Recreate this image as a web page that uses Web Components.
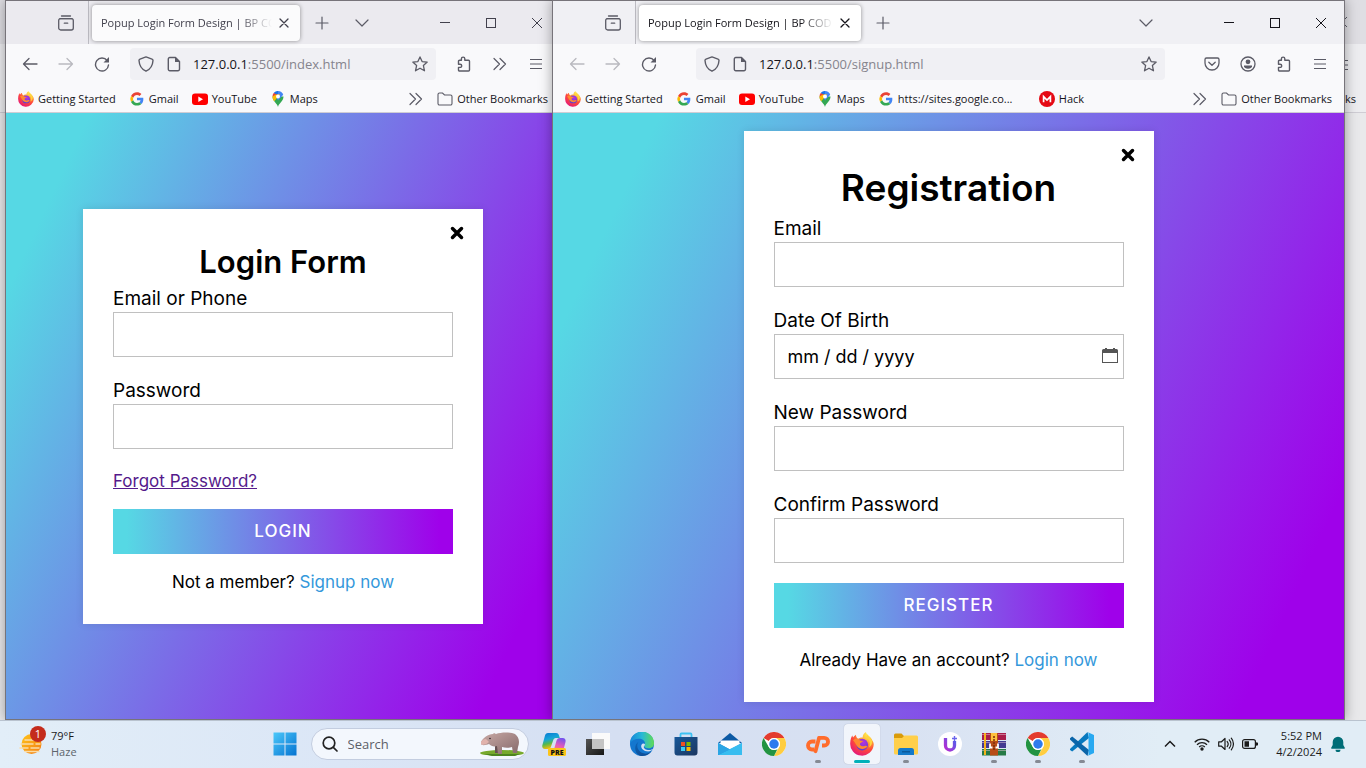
<!DOCTYPE html>
<html lang="en">
<head>
<meta charset="utf-8">
<title>Popup Login Form Design</title>
<style>
    html, body {
        margin: 0;
        height: 100%;
        overflow: hidden;
    }

    body {
        display: flex;
        flex-direction: column;
        font-family: "Open Sans", "Noto Sans", sans-serif;
        background: #e6e6e8;
    }

    .desktop {
        flex: 1;
        min-height: 0;
        display: grid;
        grid-template-columns: 5px minmax(0, 547fr) minmax(0, 793fr) 21px;
    }

    /* the login window slides a little under the signup window */
    .under {
        margin-right: -9px;
    }

    .over {
        z-index: 1;
    }
</style>
</head>
<body>
<div class="desktop">
    <window-edge></window-edge>

    <browser-window class="under" tab="Popup Login Form Design | BP CO" host-name="127.0.0.1" path=":5500/index.html">
        <icon-button slot="tools" icon="puzzle" label="Extensions"></icon-button>
        <icon-button slot="tools" icon="more" label="More tools"></icon-button>
        <icon-button slot="tools" icon="menu" label="Open application menu"></icon-button>
        <bookmark-link slot="bookmarks" icon="firefox">Getting Started</bookmark-link>
        <bookmark-link slot="bookmarks" icon="google">Gmail</bookmark-link>
        <bookmark-link slot="bookmarks" icon="youtube">YouTube</bookmark-link>
        <bookmark-link slot="bookmarks" icon="maps">Maps</bookmark-link>
        <popup-form heading="Login Form" action-label="LOGIN">
            <form-field label="Email or Phone" type="text"></form-field>
            <form-field label="Password" type="password"></form-field>
            <a slot="extra" href="#forgot">Forgot Password?</a>
            <span slot="footer">Not a member? <a href="#signup">Signup now</a></span>
        </popup-form>
    </browser-window>

    <browser-window class="over" active tab="Popup Login Form Design | BP COD" host-name="127.0.0.1" path=":5500/signup.html">
        <icon-button slot="tools" icon="pocket" label="Save to Pocket"></icon-button>
        <icon-button slot="tools" icon="account" label="Account"></icon-button>
        <icon-button slot="tools" icon="puzzle" label="Extensions"></icon-button>
        <icon-button slot="tools" icon="menu" label="Open application menu"></icon-button>
        <bookmark-link slot="bookmarks" icon="firefox">Getting Started</bookmark-link>
        <bookmark-link slot="bookmarks" icon="google">Gmail</bookmark-link>
        <bookmark-link slot="bookmarks" icon="youtube">YouTube</bookmark-link>
        <bookmark-link slot="bookmarks" icon="maps">Maps</bookmark-link>
        <bookmark-link slot="bookmarks" icon="google" wide>htts://sites.google.co...</bookmark-link>
        <bookmark-link slot="bookmarks" icon="mega">Hack</bookmark-link>
        <popup-form large heading="Registration" action-label="REGISTER">
            <form-field label="Email" type="email"></form-field>
            <form-field label="Date Of Birth" type="date"></form-field>
            <form-field label="New Password" type="password"></form-field>
            <form-field label="Confirm Password" type="password"></form-field>
            <span slot="footer">Already Have an account? <a href="#login">Login now</a></span>
        </popup-form>
    </browser-window>

    <window-edge detailed></window-edge>
</div>

<task-bar>
    <task-app icon="copilot" label="Copilot"></task-app>
    <task-app icon="taskview" label="Task View"></task-app>
    <task-app icon="edge" label="Edge"></task-app>
    <task-app icon="store" label="Microsoft Store"></task-app>
    <task-app icon="mail" label="Mail"></task-app>
    <task-app icon="chrome" label="Chrome"></task-app>
    <task-app icon="cpanel" label="cPanel" running></task-app>
    <task-app icon="firefox" label="Firefox" current></task-app>
    <task-app icon="folder" label="File Explorer" running></task-app>
    <task-app icon="sparkle" label="U"></task-app>
    <task-app icon="winrar" label="WinRAR" running></task-app>
    <task-app icon="chrome" label="Chrome" running></task-app>
    <task-app icon="vscode" label="Visual Studio Code" running></task-app>
</task-bar>

<script>
(function () {
    const line = 'fill="none" stroke="currentColor" stroke-linecap="round" stroke-linejoin="round"';

    // [viewBox size, markup]
    const icons = {
        archive: [16, `<g ${line} stroke-width="1.3"><path d="M3.5 1h9M2 3.6h12"/><rect x=".7" y="3.6" width="14.6" height="11.4" rx="2"/><path d="M6.3 8.2h3.4"/></g>`],
        close: [16, `<path ${line} stroke-width="1.3" d="M4 4l8 8M12 4l-8 8"/>`],
        plus: [16, `<path ${line} stroke-width="1.2" d="M8 2v12M2 8h12"/>`],
        down: [16, `<path ${line} stroke-width="1.2" d="M2 5l6 6 6-6"/>`],
        minimize: [16, `<path stroke="currentColor" d="M3 7.5h10"/>`],
        maximize: [16, `<rect x="3.5" y="3.5" width="9" height="9" fill="none" stroke="currentColor"/>`],
        quit: [16, `<path stroke="currentColor" d="M3 3l10 10M13 3L3 13"/>`],
        back: [16, `<path ${line} stroke-width="1.3" d="M15 8H1.5M7 2.5L1.5 8 7 13.5"/>`],
        forward: [16, `<path ${line} stroke-width="1.3" d="M1 8h13.5M9 2.5L14.5 8 9 13.5"/>`],
        reload: [16, `<path ${line} stroke-width="1.4" d="M13.2 4.6A6.5 6.5 0 1 0 14.5 9"/><path fill="currentColor" d="M15 1v5.5H9.5z"/>`],
        shield: [16, `<path ${line} stroke-width="1.4" d="M8 .9l6 2.2c.8.3 1 .7 1 1.4-.3 5-2.4 8.700-7 10.700C3.400 13.200 1.300 9.500 1 4.500c0-.7.2-1.100 1-1.400z"/>`],
        page: [16, `<path ${line} stroke-width="1.4" d="M3.800 1.500h5.700l4 4v7.700a1.500 1.500 0 0 1-1.500 1.500H3.800a1.500 1.500 0 0 1-1.500-1.500V3a1.500 1.500 0 0 1 1.500-1.500z"/><path fill="currentColor" d="M9 1l5 5H9z"/>`],
        star: [16, `<path ${line} stroke-width="1.3" d="M8 .9l2.100 4.700 5.100.5-3.800 3.500 1.100 5.200L8 12.200l-4.500 2.600 1.100-5.200L.8 6.100l5.100-.5z"/>`],
        puzzle: [16, `<path ${line} stroke-width="1.4" d="M5.400 4.200V2.800a1.700 1.700 0 0 1 3.400 0v1.400h3.700a1 1 0 0 1 1 1V14a1 1 0 0 1-1 1h-9a1 1 0 0 1-1-1v-2.600h1.600a1.600 1.600 0 0 0 0-3.200H2.500V5.200a1 1 0 0 1 1-1z"/>`],
        more: [16, `<path ${line} stroke-width="1.2" d="M2 2.500L7.500 8 2 13.500M8 2.500L13.500 8 8 13.500"/>`],
        menu: [16, `<path stroke="currentColor" stroke-width="1.2" d="M2 3.500h12M2 8h12M2 12.500h12"/>`],
        pocket: [16, `<path ${line} stroke-width="1.3" d="M2.500 2h11A1.500 1.500 0 0 1 15 3.500V7a7 7 0 0 1-14 0V3.500A1.500 1.500 0 0 1 2.500 2zM4.800 6.200L8 9.300l3.200-3.100"/>`],
        account: [16, `<circle cx="8" cy="8" r="7" fill="none" stroke="currentColor" stroke-width="1.3"/><circle cx="8" cy="5.800" r="2.400" fill="currentColor"/><path fill="currentColor" d="M4 9.500h8v.8c0 1.500-1.800 2.400-4 2.400s-4-.9-4-2.400z"/>`],
        bookmarks: [16, `<path fill="none" stroke="#5b5b66" stroke-width="1.1" d="M1 12.500v-9A1.500 1.500 0 0 1 2.500 2h3l2 2h6A1.500 1.500 0 0 1 15 5.500v7a1.500 1.500 0 0 1-1.500 1.500h-11A1.500 1.500 0 0 1 1 12.500z"/>`],
        dismiss: [16, `<path fill="none" stroke="currentColor" stroke-width="3.500" stroke-linecap="round" d="M3.500 3.500l9 9M12.500 3.500l-9 9"/>`],
        google: [48, `<g transform="translate(4 4) scale(.83)"><path fill="#ea4335" d="M24 9.500c3.500 0 6.700 1.200 9.200 3.600l6.900-6.900C35.900 2.400 30.500 0 24 0 14.600 0 6.500 5.400 2.600 13.200l8 6.200C12.400 13.700 17.700 9.500 24 9.500z"/><path fill="#4285f4" d="M47 24.600c0-1.600-.2-3.100-.4-4.600H24v9h12.900c-.6 3-2.200 5.500-4.700 7.200l7.700 6C44.400 38 47 31.800 47 24.600z"/><path fill="#fbbc05" d="M10.500 28.600a14 14 0 0 1 0-9.200l-8-6.200a24 24 0 0 0 0 21.600z"/><path fill="#34a853" d="M24 48c6.500 0 11.900-2.100 15.900-5.800l-7.700-6c-2.200 1.500-4.900 2.300-8.200 2.300-6.300 0-11.600-4.200-13.500-9.900l-8 6.200C6.500 42.600 14.600 48 24 48z"/></g>`],
        youtube: [16, `<rect y="2.500" width="16" height="11.500" rx="3" fill="#f00"/><path fill="#fff" d="M6.300 5.500v5.500l4.700-2.700z"/>`],
        maps: [16, `<path fill="#34a853" d="M8 16c.5-3.500 5.500-5.500 5.500-10.500H2.500C2.500 10.500 7.500 12.500 8 16z"/><path fill="#4285f4" d="M8 0a5.500 5.500 0 0 1 5.200 3.800L8 9.500 4 2z"/><path fill="#1a73e8" d="M8 0a5.500 5.500 0 0 0-4.300 2L8 5.500z"/><path fill="#ea4335" d="M3.700 2A5.500 5.500 0 0 0 2.500 5.500L5.500 7l2.500-3z"/><path fill="#fbbc04" d="M2.500 5.500c0 2 .7 3.400 1.700 4.800l6-7-4.700.4z"/><circle cx="8" cy="5.500" r="2" fill="#fff"/>`],
        mega: [16, `<circle cx="8" cy="8" r="8" fill="#e50914"/><path fill="none" stroke="#fff" stroke-width="1.700" d="M4.600 11.300V5.600L8 9l3.400-3.400v5.700"/>`],
        firefox: [32, `<defs><radialGradient id="a" cx=".75" cy=".1" r="1"><stop offset="0" stop-color="#fff44f"/><stop offset=".35" stop-color="#ffa436"/><stop offset=".65" stop-color="#ff4a38"/><stop offset="1" stop-color="#e2157f"/></radialGradient><radialGradient id="b" cx=".6" cy=".3" r=".7"><stop offset="0" stop-color="#b833e1"/><stop offset="1" stop-color="#5b3fd0"/></radialGradient></defs><path fill="url(#a)" d="M29.800 11.200c-1-2.700-3-4.600-4.700-6.200C22.300 2.600 21.300 1.400 21.400 0c-3 1.600-4.700 4.800-4.500 7.200-3-.2-4.500.6-6 1.800C8.600 7.700 7.900 5.800 8 3.700 6.400 4.600 5.200 5.800 4.300 7.100 3.500 7.700 3.200 4.900 3.500 4.200 1.800 6 .5 10 .3 14.500A15.700 15.700 0 1 0 31.600 17c.1-2-.5-4.200-1.800-5.800z"/><circle cx="16.300" cy="16.800" r="7.800" fill="url(#b)"/><path fill="#ff8a30" d="M4 11c2.500-2.500 6-2 8.500-.2 1.500 1 3.600.8 5 1.300-.8 1.800-3.800 2-4.200 3.500-.4 2.500 2.600 4.300 6 3 2-.7 3.200-.4 3.800.4-1.800 3.500-7 4.600-10.500 2.600C8 19 7.500 14 4 11z"/><path fill="#ffd43f" d="M21.500 7c4.500 3 6 8 4 13.500 3-2 4.300-5 4-8.500-1.500-4-5-5-6.500-9z"/>`],
        copilot: [24, `<defs><linearGradient id="a" x2=".3" y2="1"><stop offset="0" stop-color="#0878d3"/><stop offset=".45" stop-color="#16a6d8"/><stop offset=".7" stop-color="#55b84c"/><stop offset="1" stop-color="#fabd05"/></linearGradient><linearGradient id="b" x1=".7" x2=".3" y2="1"><stop offset="0" stop-color="#7354ed"/><stop offset=".5" stop-color="#e55ab9"/><stop offset="1" stop-color="#ff9a4c"/></linearGradient></defs><path fill="url(#a)" d="M6 1h8c2 0 2.500 1 3 2.500l.8 2.500h-4c-1.500 0-2.300 1-2.700 2.500L9.200 14c-.5 2-1.200 3-3 3H3c-2.300 0-3.200-1.700-2.600-4l2.600-9.500C3.500 2 4.300 1 6 1z"/><path fill="url(#b)" d="M18 6h2.500c2.700 0 3.500 1.800 3 4l-2 7.500c-.5 2-1.500 3-3 3H10c-1 0-1.700-1-2-2h1.700c1.700 0 2.300-1 2.700-2.500l2-7C15 7 16 6 18 6z"/><rect x="6" y="16" width="18" height="8" rx="1.500" fill="#fcc419"/><text x="15" y="22.500" text-anchor="middle" font-family="Open Sans, sans-serif" font-weight="800" font-size="7" fill="#111">PRE</text>`],
        taskview: [24, `<defs><linearGradient id="a" y2="1"><stop offset="0" stop-color="#555"/><stop offset="1" stop-color="#161616"/></linearGradient></defs><rect y="7" width="18" height="16" fill="url(#a)"/><rect x="6" y="1" width="18" height="16" fill="#fafafa"/><path fill="#c4c4c4" d="M6 7h12v10H6z"/>`],
        edge: [24, `<defs><linearGradient id="a" x2="1"><stop offset="0" stop-color="#1686d9"/><stop offset=".5" stop-color="#28b8d7"/><stop offset="1" stop-color="#60dc55"/></linearGradient><linearGradient id="b" x2=".7" y2="1"><stop offset="0" stop-color="#0c65b9"/><stop offset="1" stop-color="#104a91"/></linearGradient></defs><circle cx="12" cy="12" r="12" fill="#1477cf"/><path fill="url(#a)" d="M0 11.500A12 12 0 0 1 24 11.500c0 3.200-2.500 4.800-5.500 4.800-3 0-4.500-1.200-4.500-2.300 0-1 1-1.200 1-3 0-2.200-2.700-4.300-6-4.300-4 0-7.500 2-9 4.800z"/><path fill="url(#b)" d="M9 9.500c-3 2.500-2.500 9.500 4.500 11.800 4 1.200 7.500-1 8.700-3.300A12 12 0 0 1 10 23.800C4 21 3.500 12.500 9 9.500z"/><path fill="#d6e0f2" d="M14 14c-1 2.500 2 4 5 4 2 0 3.500-.6 4.500-1.500-1 2-4 3.300-7 2.800-4-.7-6.200-4.300-5-6.600.8-1.500 3-1.500 3.500-.2.1.5-.3 1-1 1.500z"/>`],
        store: [24, `<defs><linearGradient id="a" y2="1"><stop offset="0" stop-color="#17589a"/><stop offset="1" stop-color="#1c365f"/></linearGradient></defs><path fill="none" stroke="#3cc1f2" stroke-width="1.800" d="M6.500 6V2.500a1 1 0 0 1 1-1h9a1 1 0 0 1 1 1V6"/><path fill="url(#a)" d="M.5 5h23v15.500a3 3 0 0 1-3 3h-17a3 3 0 0 1-3-3z"/><path fill="#f25022" d="M7 10h4v4H7z"/><path fill="#7fba00" d="M12.500 10h4v4h-4z"/><path fill="#3ccbf4" d="M7 15h4v4H7z"/><path fill="#ffb900" d="M12.500 15h4v4h-4z"/>`],
        mail: [24, `<path fill="#0c59a4" d="M0 11L12 1l12 10z"/><path fill="#fff" d="M2.500 8.500h19V17h-19z"/><path fill="#1b8fdc" d="M0 11l12 6.500L24 11v12H0z"/><path fill="#38bdf0" d="M24 11L0 23h24z"/><path fill="#2ba5e4" d="M0 11l12 6.500L0 23z"/>`],
        chrome: [48, `<circle cx="24" cy="24" r="24" fill="#fff"/><path fill="#e33b2e" d="M3.200 12A24 24 0 0 1 44.800 12H24a12 12 0 0 0-10.400 6z"/><path fill="#ffcd40" d="M44.800 12A24 24 0 0 1 24 48l10.400-18A12 12 0 0 0 34.400 18 12 12 0 0 0 24 12z"/><path fill="#229342" d="M24 48A24 24 0 0 1 3.200 12l10.400 18A12 12 0 0 0 24 36a12 12 0 0 0 7-2z"/><circle cx="24" cy="24" r="12" fill="#fff"/><circle cx="24" cy="24" r="9.500" fill="#2f7bed"/>`],
        cpanel: [24, `<g fill="none" stroke="#ff6c2c" stroke-width="3.800"><path d="M9.500 9.500H6a4 4 0 0 0 0 8h2.200"/><path stroke-linecap="round" d="M9.500 19.200L13 6"/><path d="M13 5.800h5.200a3.800 3.800 0 0 1 0 7.700H16"/></g>`],
        folder: [24, `<path fill="#d99b0b" d="M0 3a1.500 1.500 0 0 1 1.500-1.500h6L10 4v4H0z"/><path fill="#ffcf4a" d="M0 6h8l2.500-2.500h12A1.500 1.500 0 0 1 24 5v16a1.500 1.500 0 0 1-1.500 1.500h-21A1.500 1.500 0 0 1 0 21z"/><path fill="#1479c9" d="M4 23v-4.500a2.500 2.500 0 0 1 2.500-2.500h11a2.500 2.500 0 0 1 2.500 2.500V23z"/><path fill="#0b5a9c" d="M8 19h8v1.500H8z"/>`],
        sparkle: [24, `<defs><linearGradient id="a" x1="0" x2="1" y1="1" y2="0"><stop offset="0" stop-color="#b72bd1"/><stop offset="1" stop-color="#5061ec"/></linearGradient></defs><circle cx="12" cy="12" r="12" fill="#fff"/><path fill="none" stroke="url(#a)" stroke-width="3.300" d="M7.500 6v7.500a4.500 4.500 0 0 0 9 0V9"/><path stroke="#6a65ed" stroke-width="1.400" d="M16.500 4v5M14 6.500h5"/>`],
        winrar: [24, `<path fill="#a91d4b" d="M0 1h24v7H0z"/><path fill="#433b92" d="M0 9h24v7H0z"/><path fill="#267a46" d="M0 17h24v6.500H0z"/><path stroke="#e9c7d5" opacity=".5" d="M0 2.500h24M0 10.500h24M0 18.500h24"/><path fill="#f5b21c" d="M2 1h2v22H2z"/><path fill="#b84c17" d="M8 1h8v22.500H8z"/><path fill="#ffc33e" d="M9 1h6v8H9z"/><path fill="none" stroke="#fff" stroke-width="1.800" d="M8 11.500v4h2.500M16 11.500v4h-2.500"/><path stroke="#7b2e0e" stroke-width="1.500" stroke-dasharray="2 1" d="M12 4v14"/>`],
        vscode: [24, `<path fill="#0879bf" d="M17.500 0L19 6 2.200 19.500 0 18v-1z"/><path fill="#0b65a9" d="M0 6.200L2.200 4.500 19 18l-1.500 6L0 7.500z"/><path fill="#28a9f1" d="M17.500 0L24 3v18l-6.500 3c.7-.3 1-.8 1-1.500v-21c0-.7-.3-1.200-1-1.500z"/>`],
        start: [24, `<defs><linearGradient id="a" x2="1" y2="1"><stop offset="0" stop-color="#4cc8fa"/><stop offset="1" stop-color="#0473d1"/></linearGradient></defs><path fill="url(#a)" d="M.5.5h11v11H.5zM12.500.5h11v11h-11zM.5 12.500h11v11H.5zM12.500 12.500h11v11h-11z"/>`],
        search: [16, `<g fill="none" stroke="#222" stroke-width="1.700" stroke-linecap="round"><circle cx="7" cy="7" r="5.800"/><path d="M11.300 11.300L15 15"/></g>`],
        weather: [24, `<defs><linearGradient id="a" y2="1"><stop offset="0" stop-color="#ffc51a"/><stop offset="1" stop-color="#f37b13"/></linearGradient></defs><circle cx="12.500" cy="12" r="10" fill="url(#a)"/><path stroke="#f9dca9" stroke-width="1.500" stroke-linecap="round" d="M6 8h12M2 12h12M17 12h4M1 16h8M12 16h8M6 19.500h14"/>`],
        chevron: [16, `<path fill="none" stroke="currentColor" stroke-width="1.500" d="M3 10.500l5-5 5 5"/>`],
        wifi: [16, `<g fill="none" stroke="currentColor" stroke-width="1.3"><path d="M.7 6.200a10.300 10.300 0 0 1 14.600 0M3 8.700a7 7 0 0 1 10 0M5.200 11a4 4 0 0 1 5.600 0"/></g><circle cx="8" cy="13" r="1.700" fill="currentColor"/>`],
        sound: [16, `<g fill="none" stroke="currentColor" stroke-width="1.2" stroke-linecap="round" stroke-linejoin="round"><path d="M.7 5.800h2.800L7 2.500v11l-3.500-3.300H.7zM9.200 5.500a4 4 0 0 1 0 5M11.300 3.800a6.500 6.500 0 0 1 0 8.400M13.300 2.200a9 9 0 0 1 0 11.600"/></g>`],
        battery: [16, `<rect x=".6" y="3.600" width="12.800" height="8.800" rx="2" fill="none" stroke="currentColor" stroke-width="1.2"/><path fill="currentColor" d="M2.500 5.300H7v5.400H2.500zM14 6.300l2 .5v2.400l-2 .5z"/>`],
        bell: [16, `<path fill="#006d77" d="M8 .8a5.300 5.300 0 0 1 5.300 5.300v3l1.500 2.600c.3.500 0 1-.6 1H1.800c-.6 0-.9-.5-.6-1l1.500-2.600v-3A5.300 5.300 0 0 1 8 .8zM5.500 13.700h5a2.500 2.500 0 0 1-5 0z"/>`]
    };

    function define(name, html, setup) {
        const template = document.createElement('template');
        template.innerHTML = html;

        customElements.define(name, class extends HTMLElement {
            constructor() {
                super();
                this.attachShadow({ mode: 'open' }).appendChild(template.content.cloneNode(true));
            }

            connectedCallback() {
                if (setup) setup(this, this.shadowRoot);
            }
        });
    }

    const iconTemplate = document.createElement('template');
    iconTemplate.innerHTML = `
<style>
    :host { display: inline-flex; flex: none; width: 16px; height: 16px; }
    svg { width: 100%; height: 100%; }
</style>
<svg aria-hidden="true"></svg>`;

    class AppIcon extends HTMLElement {
        constructor() {
            super();
            this.attachShadow({ mode: 'open' }).appendChild(iconTemplate.content.cloneNode(true));
        }

        static get observedAttributes() {
            return ['name'];
        }

        attributeChangedCallback(attribute, oldValue, newValue) {
            if (!icons[newValue]) return;
            const [size, markup] = icons[newValue];
            const svg = this.shadowRoot.querySelector('svg');
            svg.setAttribute('viewBox', `0 0 ${size} ${size}`);
            svg.innerHTML = markup;
        }
    }

    customElements.define('app-icon', AppIcon);

    define('icon-button', `
<style>
    :host { display: inline-flex; flex: none; width: 36px; height: 32px; }
    :host([caption]) { width: 46px; }
    :host([small]) { width: 24px; height: 24px; }
    button {
        display: flex;
        align-items: center;
        justify-content: center;
        width: 100%;
        padding: 0;
        border: 0;
        background: none;
        color: inherit;
    }
    :host([dim]) button { opacity: 0.4; }
</style>
<button type="button"><app-icon></app-icon></button>`, (el, root) => {
        root.querySelector('app-icon').setAttribute('name', el.getAttribute('icon'));
        root.querySelector('button').setAttribute('aria-label', el.getAttribute('label'));
    });

    define('bookmark-link', `
<style>
    :host { display: block; flex: none; }
    a {
        display: flex;
        align-items: center;
        gap: 4px;
        color: #15141a;
        font-size: 11px;
        line-height: 16px;
        text-decoration: none;
        white-space: nowrap;
    }
    :host([wide]) { width: 148px; }
</style>
<a href="#"><app-icon></app-icon><slot></slot></a>`, (el, root) => {
        root.querySelector('app-icon').setAttribute('name', el.getAttribute('icon'));
    });

    define('browser-window', `
<style>
    :host {
        --strip: #ebeaef;
        --ink: #42414d;
        display: flex;
        flex-direction: column;
        min-width: 0;
        box-sizing: border-box;
        border: 1px solid #77747a;
        background: #f9f9fb;
        color: #5b5b66;
        box-shadow: 0 0 12px rgba(0, 0, 0, 0.35);
    }
    :host([active]) {
        --strip: #f0f0f4;
        --ink: #15141a;
        --spring: 29px;
    }
    .strip {
        display: flex;
        align-items: center;
        height: 43px;
        background: var(--strip);
    }
    .recent {
        display: flex;
        align-items: center;
        justify-content: flex-end;
        box-sizing: border-box;
        width: 83px;
        height: 43px;
        padding-right: 14px;
        border-right: 1px solid #bcbbc2;
    }
    .tabs {
        display: flex;
        align-items: center;
        flex: 1;
        min-width: 0;
        gap: 4px;
        padding: 0 4px 0 3px;
    }
    .tab {
        display: flex;
        align-items: center;
        flex: 1;
        min-width: 0;
        max-width: 222px;
        box-sizing: border-box;
        height: 36px;
        padding: 0 4px 0 9px;
        border-radius: 4px;
        background: #fbfbfc;
        box-shadow: 0 0 4px rgba(0, 0, 0, 0.4);
        color: var(--ink);
    }
    :host([active]) .tab { background: #fff; }
    .tab span {
        flex: 1;
        overflow: hidden;
        font-size: 11px;
        white-space: nowrap;
        -webkit-mask-image: linear-gradient(to left, transparent, #000 32px);
        mask-image: linear-gradient(to left, transparent, #000 32px);
    }
    .caption {
        display: flex;
        padding-left: 42px;
        color: var(--ink);
    }
    .nav {
        display: flex;
        padding: 4px 6px 6px;
    }
    .address {
        display: flex;
        align-items: center;
        flex: 1;
        min-width: 0;
        box-sizing: border-box;
        height: 32px;
        margin: 0 var(--spring, 10px);
        padding: 0 8px;
        border-radius: 4px;
        background: #f0f0f4;
    }
    .page { margin: 0 11px 0 12px; }
    .url {
        flex: 1;
        overflow: hidden;
        color: #85848d;
        font-size: 13px;
        white-space: nowrap;
    }
    .url b { color: #15141a; font-weight: 400; }
    .bookmarks {
        display: flex;
        align-items: center;
        gap: 13px;
        height: 26px;
        padding: 0 12px;
        border-bottom: 1px solid #cfcdd4;
    }
    .bookmarks app-icon[name="more"] { margin-left: auto; }
    main {
        flex: 1;
        display: flex;
        align-items: center;
        justify-content: center;
        min-height: 0;
        background: linear-gradient(115deg, #56d8e4 10%, #9f01ea 90%);
    }
</style>
<header>
    <div class="strip">
        <div class="recent"><app-icon name="archive"></app-icon></div>
        <div class="tabs">
            <div class="tab"><span></span><icon-button small icon="close" label="Close tab"></icon-button></div>
            <icon-button icon="plus" label="New tab"></icon-button>
        </div>
        <icon-button icon="down" label="List all tabs"></icon-button>
        <div class="caption">
            <icon-button caption icon="minimize" label="Minimize"></icon-button>
            <icon-button caption icon="maximize" label="Maximize"></icon-button>
            <icon-button caption icon="quit" label="Close"></icon-button>
        </div>
    </div>
    <div class="nav">
        <icon-button class="back" icon="back" label="Back"></icon-button>
        <icon-button icon="forward" label="Forward" dim></icon-button>
        <icon-button icon="reload" label="Reload"></icon-button>
        <div class="address">
            <app-icon name="shield"></app-icon>
            <app-icon class="page" name="page"></app-icon>
            <div class="url" role="textbox" contenteditable="true" spellcheck="false" aria-label="Address"><b></b><span></span></div>
            <app-icon name="star"></app-icon>
        </div>
        <slot name="tools"></slot>
    </div>
    <div class="bookmarks">
        <slot name="bookmarks"></slot>
        <app-icon name="more"></app-icon>
        <bookmark-link icon="bookmarks">Other Bookmarks</bookmark-link>
    </div>
</header>
<main><slot></slot></main>`, (el, root) => {
        root.querySelector('.tab span').textContent = el.getAttribute('tab');
        root.querySelector('.url b').textContent = el.getAttribute('host-name');
        root.querySelector('.url span').textContent = el.getAttribute('path');
        // nothing to go back to in a fresh window
        root.querySelector('.back').toggleAttribute('dim', el.hasAttribute('active'));
    });

    // what shows of the window at the back
    define('window-edge', `
<style>
    :host {
        display: flex;
        flex-direction: column;
        min-width: 0;
        overflow: hidden;
        background: #e9e9eb;
        color: #5b5b66;
        font-size: 11px;
        line-height: 16px;
    }
    div {
        display: flex;
        align-items: center;
        justify-content: flex-end;
        box-sizing: border-box;
        padding-right: 16px;
    }
    .strip { height: 44px; background: #dfdee3; }
    .nav { height: 42px; background: #ededf0; }
    .bookmarks {
        justify-content: flex-start;
        height: 27px;
        padding: 0;
        background: #ededf0;
        border-bottom: 1px solid #cfcdd4;
        color: #15141a;
    }
    :host(:not([detailed])) .item { display: none; }
</style>
<div class="strip"><app-icon class="item" name="quit"></app-icon></div>
<div class="nav"><app-icon class="item" name="menu"></app-icon></div>
<div class="bookmarks"><span class="item">ks</span></div>`);

    define('popup-form', `
<style>
    :host {
        --title: 31px;
        --title-line: 46px;
        --footer-gap: 16px;
        display: block;
        box-sizing: border-box;
        width: 400px;
        max-width: 100%;
        padding: 30px;
        position: relative;
        background: #fff;
        box-shadow: 0 0 8px rgba(0, 0, 0, 0.1);
        color: #000;
        font-family: Inter, "Open Sans", sans-serif;
    }
    :host([large]) {
        --title: 37px;
        --title-line: 54px;
        --footer-gap: 20px;
        width: 410px;
    }
    .dismiss {
        position: absolute;
        top: 12px;
        right: 14px;
    }
    h1 {
        margin: 0;
        font-size: var(--title);
        font-weight: 600;
        line-height: var(--title-line);
        text-align: center;
    }
    ::slotted(a) {
        display: block;
        width: fit-content;
        margin-bottom: 16px;
        color: #551a8b;
        font-size: 17px;
        line-height: 24px;
    }
    .action {
        display: block;
        width: 100%;
        height: 45px;
        border: 0;
        background: linear-gradient(to right, #56d8e4 4%, #9f01ea 96%);
        color: #fff;
        font: 500 17px Inter, "Open Sans", sans-serif;
        letter-spacing: 1px;
    }
    footer {
        margin-top: var(--footer-gap);
        font-size: 17px;
        line-height: 24px;
        text-align: center;
    }
</style>
<icon-button class="dismiss" small icon="dismiss" label="Close form"></icon-button>
<form>
    <h1></h1>
    <slot></slot>
    <slot name="extra"></slot>
    <button class="action" type="button"></button>
    <footer><slot name="footer"></slot></footer>
</form>`, (el, root) => {
        root.querySelector('h1').textContent = el.getAttribute('heading');
        root.querySelector('.action').textContent = el.getAttribute('action-label');
        const link = el.querySelector('[slot="footer"] a');
        link.style.color = '#3498db';
        link.style.textDecoration = 'none';
    });

    define('form-field', `
<style>
    :host {
        display: block;
        margin-bottom: 20px;
        line-height: 27px;
    }
    label { display: block; font-size: 19px; }
    input {
        display: block;
        width: 100%;
        height: 45px;
        box-sizing: border-box;
        padding: 0 5px 0 12px;
        border: 1px solid silver;
        border-radius: 0;
        background: #fff;
        color: #000;
        font: 18px Inter, "Open Sans", sans-serif;
    }
    input::-webkit-datetime-edit-text { padding: 0 4px; }
    input::-webkit-calendar-picker-indicator {
        width: 16px;
        height: 16px;
        padding: 0;
        background: url("data:image/svg+xml,%3Csvg xmlns='http://www.w3.org/2000/svg' viewBox='0 0 16 16'%3E%3Cpath fill='%23555' d='M3 0h2v1h6V0h2v1h1.500A1.500 1.500 0 0 1 16 2.500V15H0V2.500A1.500 1.500 0 0 1 1.500 1H3zM1 5v9h14V5z' fill-rule='evenodd'/%3E%3C/svg%3E") center / 16px no-repeat;
    }
</style>
<label for="field"></label>
<input id="field">`, (el, root) => {
        root.querySelector('label').textContent = el.getAttribute('label');
        root.querySelector('input').type = el.getAttribute('type');
    });

    define('task-app', `
<style>
    :host { display: block; flex: none; }
    button {
        display: flex;
        flex-direction: column;
        align-items: center;
        width: 36px;
        height: 40px;
        margin: 4px;
        padding: 8px 0 0;
        box-sizing: border-box;
        border: 0;
        border-radius: 4px;
        background: none;
    }
    app-icon { width: 24px; height: 24px; }
    :host([current]) button {
        background: rgba(255, 255, 255, 0.65);
        box-shadow: 0 0 1px rgba(0, 0, 0, 0.3);
    }
    :host([running]) button::after, :host([current]) button::after {
        content: "";
        width: 6px;
        height: 3px;
        margin-top: 4px;
        border-radius: 2px;
        background: #858a94;
    }
    :host([current]) button::after { width: 16px; background: #00b0b9; }
</style>
<button type="button"><app-icon></app-icon></button>`, (el, root) => {
        root.querySelector('app-icon').setAttribute('name', el.getAttribute('icon'));
        root.querySelector('button').setAttribute('aria-label', el.getAttribute('label'));
    });

    define('task-bar', `
<style>
    :host {
        display: grid;
        grid-template-columns: 1fr auto 1fr;
        align-items: center;
        z-index: 2;
        height: 48px;
        background: linear-gradient(to right, #e2eef8, #dbe6f6 25%, #d5dff2 45%, #d8e1f2 65%, #e1edf6 85%);
        box-shadow: inset 0 1px #b9c3cf;
        color: #1b1b1b;
        font-size: 11px;
        line-height: 16px;
    }
    .weather {
        display: flex;
        align-items: center;
        gap: 8px;
        padding-left: 19px;
    }
    .sun { position: relative; display: flex; }
    .sun app-icon { width: 24px; height: 24px; }
    .badge {
        position: absolute;
        top: -6px;
        left: 11px;
        width: 16px;
        border-radius: 8px;
        background: #c42b1c;
        color: #fff;
        text-align: center;
    }
    .weather small { display: block; font-size: 11px; color: #5d646b; }
    .apps { display: flex; align-items: center; }
    .search {
        display: flex;
        align-items: center;
        box-sizing: border-box;
        width: 218px;
        height: 32px;
        margin: 0 3px 0 4px;
        padding: 0 4px 0 10px;
        gap: 10px;
        border: 1px solid #c3cde0;
        border-radius: 16px;
        background: #f3f7fd;
    }
    .search input {
        flex: 1;
        min-width: 0;
        padding: 0;
        border: 0;
        background: none;
        font: 13px "Open Sans", sans-serif;
    }
    .search input::placeholder { color: #5c6068; }
    .search svg { flex: none; width: 44px; height: 24px; }
    .tray {
        display: flex;
        align-items: center;
        justify-content: flex-end;
        gap: 8px;
        padding-right: 20px;
    }
    .tray app-icon:first-child { margin-right: 8px; }
    time { margin-left: 10px; text-align: right; }
</style>
<div class="weather">
    <div class="sun"><app-icon name="weather"></app-icon><span class="badge">1</span></div>
    <div>79°F<small>Haze</small></div>
</div>
<div class="apps">
    <task-app icon="start" label="Start"></task-app>
    <label class="search">
        <app-icon name="search"></app-icon>
        <input type="text" placeholder="Search" aria-label="Search">
        <svg viewBox="0 0 44 24" aria-hidden="true">
            <defs><linearGradient id="hide" y2="1"><stop offset="0" stop-color="#c9aaa6"/><stop offset="1" stop-color="#85696b"/></linearGradient></defs>
            <ellipse cx="22" cy="21" rx="22" ry="3" fill="#77a92d"/>
            <path fill="#4d8420" d="M4 22h36l-5 2H12z"/>
            <path fill="#665052" d="M15 13h4v8h-4zM34 11h3v9h-3z"/>
            <path fill="url(#hide)" d="M1 10c2-4 7-8 12-8l1-1 2 1c5-2 15-2 19 0 4 3 5 8 3 13l-1 6h-4l-1-6c-3 1-7 1-10 0v7h-4l-1-8c-3 1-6 0-8-2-3 1-7 2-8 0z"/>
            <path fill="#e1b3ad" d="M1 10c1-2 3-3 5-3l3 3c-2 2-6 4-8 2z"/>
            <circle cx="10" cy="6.500" r=".8" fill="#2f2326"/>
        </svg>
    </label>
    <slot></slot>
</div>
<div class="tray">
    <app-icon name="chevron"></app-icon>
    <app-icon name="wifi"></app-icon>
    <app-icon name="sound"></app-icon>
    <app-icon name="battery"></app-icon>
    <time datetime="2024-04-02T17:52">5:52 PM<br>4/2/2024</time>
    <app-icon name="bell"></app-icon>
</div>`);
})();
</script>
</body>
</html>
